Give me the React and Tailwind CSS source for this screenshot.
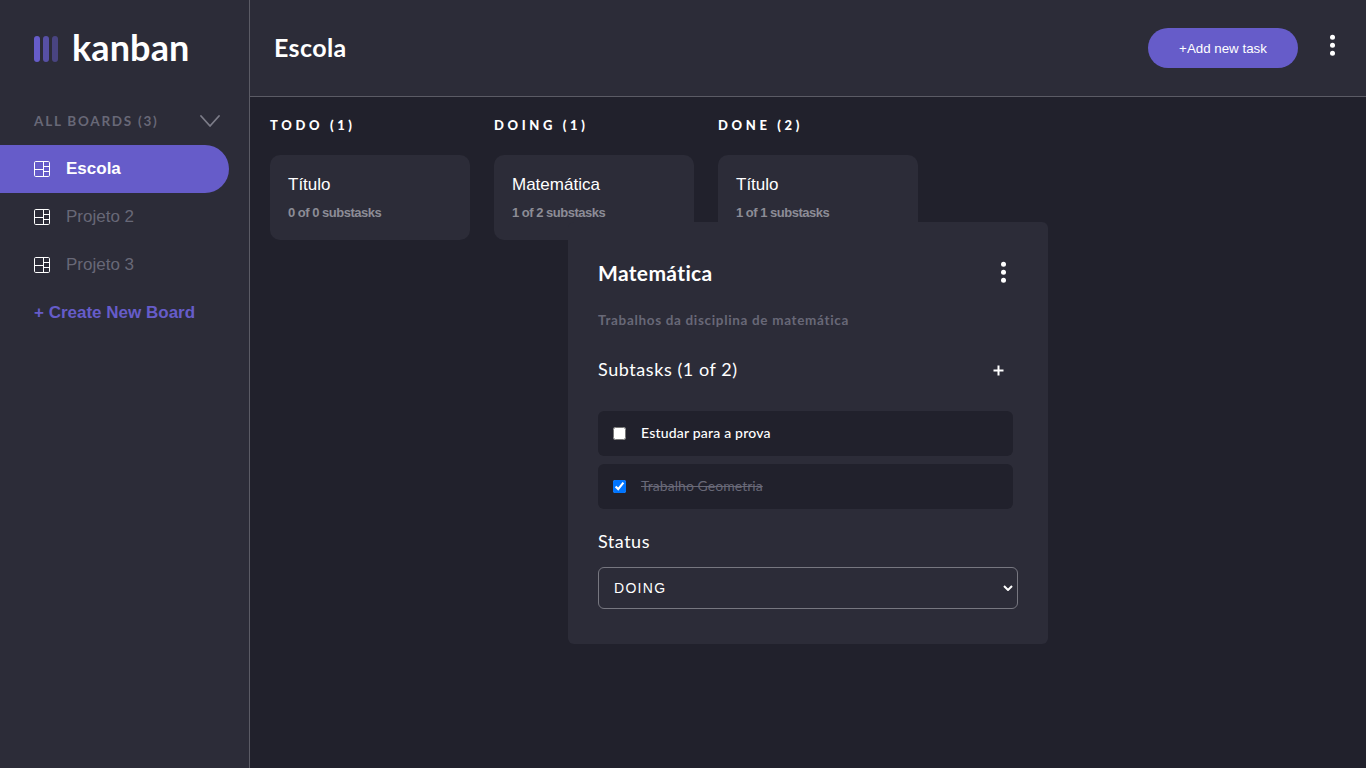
const boards = ["Escola", "Projeto 2", "Projeto 3"];

const columns = [
  { name: "TODO (1)", title: "Título", progress: "0 of 0 substasks" },
  { name: "DOING (1)", title: "Matemática", progress: "1 of 2 substasks" },
  { name: "DONE (2)", title: "Título", progress: "1 of 1 substasks" },
];

function BoardIcon() {
  return (
    <svg width="16" height="16" viewBox="0 0 16 16" fill="none" stroke="white" className="shrink-0">
      <rect x="0.5" y="0.5" width="15" height="15" rx="1.2" />
      <path d="M9.5 .5v15M.5 8.5h9M9.5 5.5h6M9.5 10.5h6" />
    </svg>
  );
}

function Dots() {
  return (
    <svg width="6" height="22" viewBox="0 0 6 22" fill="white" className="block">
      <circle cx="3.5" cy="3.2" r="2.5" />
      <circle cx="3.5" cy="11.2" r="2.5" />
      <circle cx="3.5" cy="19.2" r="2.5" />
    </svg>
  );
}

function Sidebar() {
  return (
    <aside className="flex h-full w-[250px] shrink-0 flex-col border-r border-[#5b5b65] bg-[#2c2c38]">
      <div className="flex h-[96px] items-center pl-[34px]">
        <svg width="24" height="26" viewBox="0 0 24 26" fill="#665cc9" className="mt-[2px] block">
          <rect width="6" height="26" rx="3" />
          <rect x="9" width="6" height="26" rx="3" opacity=".75" />
          <rect x="18" width="6" height="26" rx="3" opacity=".5" />
        </svg>
        <span className="-mt-[2px] ml-[14px] font-[Lato] text-[36px] leading-[44px] font-bold tracking-[0.1px] text-white">kanban</span>
      </div>
      <div className="flex h-[49px] items-center justify-between pr-[29px] pl-[34px]">
        <span className="mt-[2px] font-[Lato] text-[13.5px] font-bold tracking-[1.75px] text-[#686877]">ALL BOARDS (3)</span>
        <svg width="20" height="12" viewBox="0 0 20 12" fill="none" stroke="#7c7c88" strokeWidth="1.8" strokeLinecap="round" strokeLinejoin="round">
          <path d="M1 1l9 10 9-10" />
        </svg>
      </div>
      <nav className="flex flex-col text-[17px]">
        {boards.map((b, i) => (
          <div
            key={b}
            className={
              "flex h-[48px] w-[229px] items-center gap-4 rounded-r-full pl-[34px] " +
              (i === 0 ? "bg-[#665cc9] font-bold text-white" : "text-[#686877]")
            }
          >
            <BoardIcon />
            <span>{b}</span>
          </div>
        ))}
        <div className="flex h-[48px] items-center pl-[34px] font-bold text-[#665cc9]">+ Create New Board</div>
      </nav>
    </aside>
  );
}

function TaskModal() {
  return (
    <section className="absolute top-[222px] left-[568px] h-[422px] w-[480px] rounded-md bg-[#2c2c38] px-[30px] font-[Lato] text-white">
      <div className="flex h-[100px] items-center justify-between pr-[12px]">
        <h2 className="mt-[2px] text-[21px] font-bold tracking-[0.35px]">Matemática</h2>
        <Dots />
      </div>
      <p className="-mt-[13px] h-[23px] text-[13.5px] leading-[22px] font-bold tracking-[0.67px] text-[#686877]">
        Trabalhos da disciplina de matemática
      </p>
      <div className="mt-[24px] flex h-[30px] items-center justify-between pr-[14px]">
        <h3 className="-mt-[4px] text-[18px] tracking-[0.57px]">Subtasks (1 of 2)</h3>
        <svg width="11" height="11" viewBox="0 0 11 11" stroke="white" strokeWidth="2" className="-mt-px block">
          <path d="M5.5 .5v10M.5 5.5h10" />
        </svg>
      </div>
      <div className="mt-[25px] flex w-[415px] flex-col gap-2 text-[14px]">
        <label className="flex h-[45px] items-center rounded-md bg-[#21212c] pl-[15px]">
          <input type="checkbox" className="m-0 size-[13px]" />
          <span className="-mt-[2px] ml-[15px] font-medium tracking-[0.2px]">Estudar para a prova</span>
        </label>
        <label className="flex h-[45px] items-center rounded-md bg-[#21212c] pl-[15px]">
          <input type="checkbox" defaultChecked className="m-0 size-[13px]" />
          <span className="-mt-[2px] ml-[15px] tracking-[0.05px] text-[#686877] line-through">Trabalho Geometria</span>
        </label>
      </div>
      <h3 className="mt-[20px] h-[25px] text-[18px] leading-[24px] tracking-[0.5px]">Status</h3>
      <div className="mt-[13px] flex h-[42px] w-[420px] items-center justify-between rounded-md border border-[#777780] pr-[4px] pl-[15px] font-['Liberation_Sans'] text-[14px] tracking-[1.3px]">
        <span>DOING</span>
        <svg width="10" height="6" viewBox="0 0 10 6" fill="none" stroke="white" strokeWidth="2">
          <path d="M1 1l4 4 4-4" />
        </svg>
      </div>
    </section>
  );
}

export default function App() {
  return (
    <div className="relative flex h-screen w-full overflow-hidden bg-[#21212c] font-['Liberation_Sans',sans-serif] leading-normal">
      <Sidebar />
      <div className="flex min-w-0 flex-1 flex-col">
        <header className="flex h-[97px] items-center border-b border-[#5b5b65] bg-[#2c2c38] pr-[31px] pl-6">
          <h1 className="-mt-px flex-1 font-[Lato] text-[25px] font-bold tracking-[0.4px] text-white">Escola</h1>
          <button className="h-[40px] w-[150px] rounded-full bg-[#665cc9] pt-[2px] text-[13.33px] text-white">+Add new task</button>
          <div className="-mt-[7px] ml-[31px]">
            <Dots />
          </div>
        </header>
        <main className="flex gap-6 pt-[17px] pl-5">
          {columns.map((c) => (
            <section key={c.name} className="w-[200px]">
              <h2 className="h-[23px] font-[Lato] text-[13px] leading-[22px] font-black tracking-[3.65px] whitespace-nowrap text-white">
                {c.name}
              </h2>
              <article className="mt-[18px] h-[85px] rounded-[10px] bg-[#2c2c38] px-[18px] pt-[18px]">
                <h3 className="text-[17px] leading-[24px] text-white">{c.title}</h3>
                <p className="mt-[7px] text-[13px] leading-[18px] font-bold tracking-[-0.5px] text-[#8c8c96]">{c.progress}</p>
              </article>
            </section>
          ))}
        </main>
      </div>
      <TaskModal />
    </div>
  );
}
